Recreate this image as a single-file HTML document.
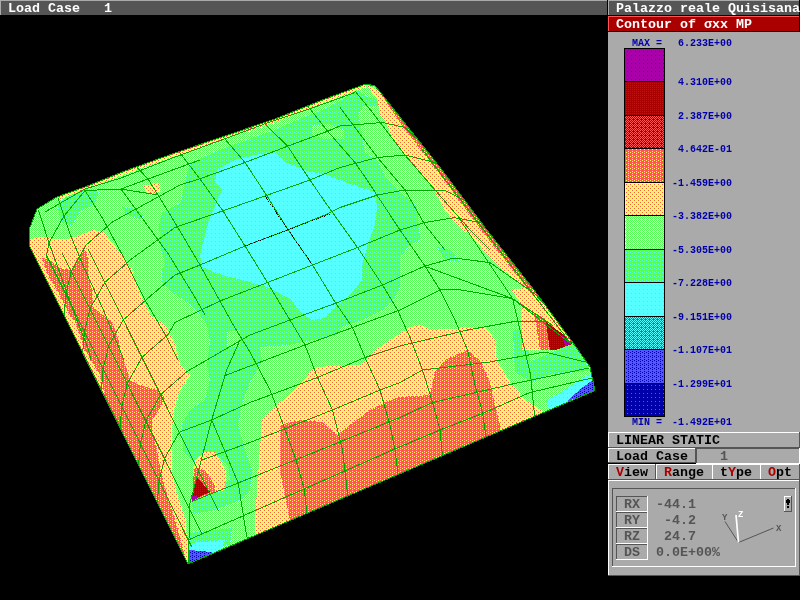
<!DOCTYPE html>
<html><head><meta charset="utf-8">
<style>
html,body{margin:0;padding:0;background:#000;width:800px;height:600px;overflow:hidden;position:relative;}
.t8{position:absolute;will-change:transform;font-family:"Liberation Mono",monospace;font-size:13.33px;font-weight:bold;line-height:14px;white-space:pre;color:#000;}
.t6{position:absolute;will-change:transform;font-family:"Liberation Mono",monospace;font-size:10px;font-weight:bold;line-height:10px;white-space:pre;color:#0000aa;}
.r{color:#aa0000;}
svg{position:absolute;left:0;top:0;}
</style></head><body>
<svg width="800" height="600" viewBox="0 0 800 600" shape-rendering="crispEdges">
<defs><pattern id="pM" width="4" height="4" patternUnits="userSpaceOnUse"><rect width="4" height="4" fill="#aa00aa"/><rect x="3" y="3" width="1" height="1" fill="#aa0000"/></pattern><pattern id="pDR" width="4" height="4" patternUnits="userSpaceOnUse"><rect width="4" height="4" fill="#aa0000"/><rect x="0" y="1" width="1" height="1" fill="#aa00aa"/><rect x="2" y="1" width="1" height="1" fill="#aa00aa"/><rect x="0" y="3" width="1" height="1" fill="#aa00aa"/><rect x="2" y="3" width="1" height="1" fill="#aa00aa"/></pattern><pattern id="pRC" width="4" height="4" patternUnits="userSpaceOnUse"><rect width="4" height="4" fill="#aa0000"/><rect x="0" y="0" width="1" height="1" fill="#ff5555"/><rect x="2" y="0" width="1" height="1" fill="#ff5555"/><rect x="1" y="1" width="1" height="1" fill="#ff5555"/><rect x="3" y="1" width="1" height="1" fill="#ff5555"/><rect x="0" y="2" width="1" height="1" fill="#ff5555"/><rect x="2" y="2" width="1" height="1" fill="#ff5555"/><rect x="3" y="3" width="1" height="1" fill="#ff5555"/></pattern><pattern id="pLR" width="4" height="4" patternUnits="userSpaceOnUse"><rect width="4" height="4" fill="#ff5555"/><rect x="2" y="0" width="1" height="1" fill="#ffff55"/><rect x="0" y="1" width="1" height="1" fill="#ffff55"/><rect x="0" y="3" width="1" height="1" fill="#ffff55"/></pattern><pattern id="pY" width="4" height="4" patternUnits="userSpaceOnUse"><rect width="4" height="4" fill="#ffff55"/><rect x="2" y="0" width="1" height="1" fill="#ff5555"/><rect x="0" y="2" width="1" height="1" fill="#ff5555"/></pattern><pattern id="pYG" width="4" height="4" patternUnits="userSpaceOnUse"><rect width="4" height="4" fill="#ffff55"/><rect x="0" y="0" width="1" height="1" fill="#55ff55"/><rect x="2" y="0" width="1" height="1" fill="#55ff55"/><rect x="1" y="1" width="1" height="1" fill="#55ff55"/><rect x="3" y="1" width="1" height="1" fill="#55ff55"/><rect x="0" y="2" width="1" height="1" fill="#55ff55"/><rect x="2" y="2" width="1" height="1" fill="#55ff55"/><rect x="3" y="3" width="1" height="1" fill="#55ff55"/></pattern><pattern id="pG" width="4" height="4" patternUnits="userSpaceOnUse"><rect width="4" height="4" fill="#55ff55"/><rect x="2" y="0" width="1" height="1" fill="#55ffff"/><rect x="0" y="1" width="1" height="1" fill="#55ffff"/><rect x="0" y="3" width="1" height="1" fill="#55ffff"/></pattern><pattern id="pC" width="4" height="4" patternUnits="userSpaceOnUse"><rect width="4" height="4" fill="#55ffff"/><rect x="3" y="1" width="1" height="1" fill="#55ff55"/></pattern><pattern id="pLB" width="4" height="4" patternUnits="userSpaceOnUse"><rect width="4" height="4" fill="#5555ff"/><rect x="0" y="0" width="1" height="1" fill="#55ffff"/><rect x="2" y="0" width="1" height="1" fill="#55ffff"/><rect x="1" y="1" width="1" height="1" fill="#55ffff"/><rect x="3" y="1" width="1" height="1" fill="#55ffff"/><rect x="0" y="2" width="1" height="1" fill="#55ffff"/><rect x="2" y="2" width="1" height="1" fill="#55ffff"/><rect x="3" y="3" width="1" height="1" fill="#55ffff"/></pattern><pattern id="pB" width="4" height="4" patternUnits="userSpaceOnUse"><rect width="4" height="4" fill="#5555ff"/><rect x="2" y="0" width="1" height="1" fill="#0000aa"/><rect x="0" y="1" width="1" height="1" fill="#0000aa"/><rect x="0" y="3" width="1" height="1" fill="#0000aa"/></pattern><pattern id="pDB" width="4" height="4" patternUnits="userSpaceOnUse"><rect width="4" height="4" fill="#0000aa"/><rect x="3" y="1" width="1" height="1" fill="#5555ff"/></pattern><clipPath id="sil"><polygon points="29,230 30,247 188,564 594,391 594,386 590,367 573,343 534,290 486,229 442,170 380,92 375,86 366,84 325,99 275,119 225,136 175,153 125,171 85,187 57,197 37,209"/></clipPath></defs>
<g clip-path="url(#sil)">
<polygon points="29,230 30,247 188,564 594,391 594,386 590,367 573,343 534,290 486,229 442,170 380,92 375,86 366,84 325,99 275,119 225,136 175,153 125,171 85,187 57,197 37,209" fill="url(#pYG)"/>
<polygon points="159,226 162,213 181,203 185,182 190,163 225,148 275,130 300,119 325,109 342,100 356,90 368,97 377,99 382,106 363,106 358,115 361,127 363,143 365,153 377,160 386,178 400,192 417,206 420,240 410,245 400,257 400,287 395,297 382,310 362,320 342,327 337,335 288,345 260,347 262,362 250,382 242,403 238,425 245,450 252,470 250,490 240,500 215,510 193,514 192,497 212,490 230,480 228,465 215,455 205,452 195,462 183,452 182,425 190,410 205,400 210,380 207,365 210,342 207,325 200,315 187,302 172,292 162,282 162,270 165,264 161,249" fill="url(#pG)"/>
<polygon points="57,204 70,195 84,189 99,192 95,204 80,211 72,226 61,222" fill="url(#pG)"/>
<polygon points="122,207 135,209 144,215 140,219 127,215" fill="url(#pG)"/>
<polygon points="513,331 527,328 530,362 558,350 573,343 588,366 590,371 551,374 532,382 515,372" fill="url(#pG)"/>
<polygon points="190,533 232,528 230,545 190,550" fill="url(#pG)"/>
<polygon points="437,247 450,250 460,262 445,260" fill="url(#pG)"/>
<polygon points="227,332 240,330 240,347 227,347" fill="url(#pYG)"/>
<polygon points="312,125 330,124 344,130 344,139 325,139 312,135" fill="url(#pYG)"/>
<polygon points="217,170 235,160 255,155 275,152 285,162 310,172 325,174 347,183 375,192 377,206 375,225 370,238 362,265 362,280 350,295 335,307 325,318 312,320 300,312 292,300 267,287 242,280 222,275 202,267 200,255 205,235 210,217 222,190 215,182" fill="url(#pC)"/>
<polygon points="546,401 565,390 583,378 593,373 594,391 550,410" fill="url(#pC)"/>
<polygon points="189,543 225,540 220,555 190,564" fill="url(#pC)"/>
<polygon points="569,399 583,387 593,380 594,391 566,402" fill="url(#pB)"/>
<polygon points="189,550 212,552 205,560 188,564" fill="url(#pB)"/>
<polygon points="30,239 41,237 54,239 67,239 79,236 92,230 103,232 112,243 124,258 132,270 137,287 145,305 150,315 165,325 175,345 180,365 190,375 180,390 178,395 173,413 172,435 172,470 177,495 185,520 188,545 188,564 30,247" fill="url(#pY)"/>
<polygon points="143,185 159,184 160,192 148,194" fill="url(#pY)"/>
<polygon points="60,196 125,170 175,152 225,135 275,118 325,98 366,83 366,87 325,102 275,122 225,139 175,156 125,174 60,199" fill="url(#pY)"/>
<polygon points="366,84 380,92 442,170 486,229 534,290 573,343 548,348 540,350 522,350 522,306 512,290 525,288 512,277 492,260 475,240 455,222 445,210 431,185 421,174 407,157 393,139 386,122 381,117 377,99" fill="url(#pY)"/>
<polygon points="262,420 275,407 295,390 315,367 360,365 380,347 395,337 410,327 420,325 430,330 485,327 495,340 497,362 510,382 525,400 545,413 255,536 255,520" fill="url(#pY)"/>
<polygon points="195,460 205,452 215,452 225,470 225,490 200,497 192,497" fill="url(#pY)"/>
<polygon points="42,258 50,260 60,268 72,270 78,257 85,249 88,258 88,273 92,290 93,307 103,315 112,322 117,335 122,355 130,380 140,385 157,390 165,397 160,408 152,420 152,433 157,450 160,467 163,480 167,495 172,510 178,530 186,560 188,564 106,400 100,375 85,350 80,335 75,322 68,312 63,302 57,290 48,275" fill="url(#pLR)"/>
<polygon points="280,470 280,425 300,420 322,422 337,435 350,425 370,410 390,400 400,397 430,395 435,372 445,360 467,350 480,360 490,382 495,405 500,425 501,432 290,521 285,495" fill="url(#pLR)"/>
<polygon points="534,312 546,320 572,344 556,350 540,350" fill="url(#pLR)"/>
<polygon points="380,92 442,170 486,229 534,290 530,292 482,231 438,172 400,123" fill="url(#pLR)"/>
<polygon points="194,468 205,470 215,485 215,493 192,500" fill="url(#pLR)"/>
<polygon points="197,477 210,492 192,500" fill="url(#pDR)"/>
<polygon points="546,322 560,332 572,344 556,350 550,350" fill="url(#pDR)"/>
<polygon points="191,495 199,497 192,502" fill="url(#pM)"/>
<polygon points="562,336 573,343 565,346" fill="url(#pM)"/>
<polyline points="133,163 148,179 158,195 177,226 200,265 220,301 235,328 250,352 270,390 280,416 296,460 304,488 307,513" fill="none" stroke="#00aa00" stroke-width="1"/>
<polyline points="175,148 180,153 200,179 223,211 245,246 267.5,282.5 290,320 305,345 317.5,377.5 332.5,410 342.5,450 348,497" fill="none" stroke="#00aa00" stroke-width="1"/>
<polyline points="220,134 225,139 245,162.5 267,196 287.5,229 312.5,265 335,302 352.5,327.5 365,357.5 380,390 390,425 395,450 398,474" fill="none" stroke="#00aa00" stroke-width="1"/>
<polyline points="262,119 265,124 287.5,146 310,180 325,202 357.5,247.5 382.5,285 397.5,310 410,337.5 422.5,370 432.5,402.5 440,430 442.5,456" fill="none" stroke="#00aa00" stroke-width="1"/>
<polyline points="305,103 310,109 327.5,131 355,162.5 367,180 400,230 425,266 440,290 455,320 467.5,350 475,385 482.5,412.5 486,437" fill="none" stroke="#00aa00" stroke-width="1"/>
<polyline points="355,91 372.5,112.5 405,155 435,190 470,230 490,250" fill="none" stroke="#00aa00" stroke-width="1"/>
<polyline points="340,107.5 377.5,157.5 405,190 425,225 445,250" fill="none" stroke="#00aa00" stroke-width="1"/>
<polyline points="427,267 512.6,298.6 571,343.7" fill="none" stroke="#00aa00" stroke-width="1"/>
<polyline points="458.6,217.6 512.6,298.6 530.6,375 535,420" fill="none" stroke="#00aa00" stroke-width="1"/>
<polyline points="422.5,150 571,343.7" fill="none" stroke="#00aa00" stroke-width="1"/>
<polyline points="45,212 85,189 121,178 175,157 225,138.75 265,123.75 310,108.75 355,92.5" fill="none" stroke="#00aa00" stroke-width="1"/>
<polyline points="112.4,221.9 180,185 200,178.75 245,162.5 287.5,146.25 327.5,131.25 340,126 382.5,122.5 405,127.5 428,150" fill="none" stroke="#00aa00" stroke-width="1"/>
<polyline points="131,259.3 175,227.5 222.5,211 265,196 310,180 340,167.5 377.5,157.5 405,155 435,162.5 455,178" fill="none" stroke="#00aa00" stroke-width="1"/>
<polyline points="149.7,296.7 175,275 200,265 245,246 287.5,230 325,215 340,207.5 377.5,195 405,190 445,190.5 481,208.5 508,235.6" fill="none" stroke="#00aa00" stroke-width="1"/>
<polyline points="168.4,334.1 175,322.5 220,301 267.5,282.5 312.5,265 357.5,247.5 400,230 425,222.5 454,217.6 490,224.3 521.6,253.6" fill="none" stroke="#00aa00" stroke-width="1"/>
<polyline points="187,371.5 250,335 290,320 337.5,302.5 382.5,285 425,266 454,258 490,262.6 535,294 545,305" fill="none" stroke="#00aa00" stroke-width="1"/>
<polyline points="224,376 250,366 305,345 352.5,327.5 400,310 440,290 458.6,289.6 512.6,298.6 553,325.7" fill="none" stroke="#00aa00" stroke-width="1"/>
<polyline points="211.7,420 250,402.5 317.5,377.5 365,357.5 400,346 467.6,330 517,321 546,322" fill="none" stroke="#00aa00" stroke-width="1"/>
<polyline points="201.7,460 250,442.5 332.5,410 380,390 400,382.5 422.5,370 490,362 545,352 585,362" fill="none" stroke="#00aa00" stroke-width="1"/>
<polyline points="191.7,501.7 320,450 387.5,422.5 400,417.5 432.5,402.5 512.6,384 589,368" fill="none" stroke="#00aa00" stroke-width="1"/>
<polyline points="188.3,540 392.5,450 440,430 485,412.5 530,392.5 592,378" fill="none" stroke="#00aa00" stroke-width="1"/>
<polyline points="188.3,563.3 190,503.3 211.7,420 226.7,370 240,340" fill="none" stroke="#00aa00" stroke-width="1"/>
<polyline points="211.7,420 238.3,483.3 246.7,536.7 249,538" fill="none" stroke="#00aa00" stroke-width="1"/>
<polyline points="46.7,255.8 191.8,547.0" fill="none" stroke="#00aa00" stroke-width="1"/>
<polyline points="62.1,253.1 201.9,533.6" fill="none" stroke="#00aa00" stroke-width="1"/>
<polyline points="87.8,248.7 218.7,511.3" fill="none" stroke="#00aa00" stroke-width="1"/>
<polyline points="112.5,221.9 86.0,245.1 71.2,271.5 65.9,294.3 64.0,315.3" fill="none" stroke="#00aa00" stroke-width="1"/>
<polyline points="131.1,259.3 104.7,282.5 89.9,308.9 84.5,331.7 82.7,352.7" fill="none" stroke="#00aa00" stroke-width="1"/>
<polyline points="149.7,296.7 123.3,319.9 108.5,346.3 103.1,369.1 101.3,390.1" fill="none" stroke="#00aa00" stroke-width="1"/>
<polyline points="168.4,334.1 142.0,357.3 127.2,383.7 121.8,406.5 120.0,427.5" fill="none" stroke="#00aa00" stroke-width="1"/>
<polyline points="187.0,371.5 160.6,394.7 145.8,421.1 140.4,443.9 138.6,464.9" fill="none" stroke="#00aa00" stroke-width="1"/>
<polyline points="179.3,432.2 164.5,458.5 159.1,481.3 157.3,502.3" fill="none" stroke="#00aa00" stroke-width="1"/>
<polyline points="179.2,432.2 211.7,420" fill="none" stroke="#00aa00" stroke-width="1"/>
<polyline points="85,190.5 103,219 124,258 145,300 166,336 178,360" fill="none" stroke="#00aa00" stroke-width="1"/>
<polyline points="38.5,210 49,243 61,276 76,318 88,348 91,360" fill="none" stroke="#00aa00" stroke-width="1"/>
<polyline points="58,198 70,234 85,270 103,309 124,360" fill="none" stroke="#00aa00" stroke-width="1"/>
<polyline points="121,189 145,222 169,255 193,294 205,315" fill="none" stroke="#00aa00" stroke-width="1"/>
<polyline points="85,190.5 64,216 49,243 46,258" fill="none" stroke="#00aa00" stroke-width="1"/>
<polyline points="85,190.5 121,189 158,195" fill="none" stroke="#00aa00" stroke-width="1"/>
<polyline points="121,189 148,179 200,160" fill="none" stroke="#00aa00" stroke-width="1"/>
<polyline points="265,196 287.5,229 312.5,265" fill="none" stroke="#000" stroke-width="1" stroke-dasharray="1 1"/>
<polyline points="245,246 287.5,230 330,214" fill="none" stroke="#000" stroke-width="1" stroke-dasharray="1 1"/>
</g>
<polygon points="29,230 30,247 188,564 594,391 594,386 590,367 573,343 534,290 486,229 442,170 380,92 375,86 366,84 325,99 275,119 225,136 175,153 125,171 85,187 57,197 37,209" fill="none" stroke="#00aa00" stroke-width="1"/>
<!-- top bars -->
<rect x="0" y="0" width="607" height="15" fill="#aaaaaa"/>
<rect x="1" y="1" width="606" height="14" fill="#555555"/>
<rect x="607" y="0" width="1" height="15" fill="#000"/>
<rect x="608" y="0" width="191" height="15" fill="#aaaaaa"/>
<rect x="609" y="1" width="190" height="14" fill="#555555"/>
<rect x="608" y="16" width="191" height="15" fill="#ff5555"/>
<rect x="609" y="17" width="190" height="14" fill="#aa0000"/>
<!-- panel -->
<rect x="608" y="32" width="192" height="400" fill="#aaaaaa"/>
<rect x="624" y="48" width="41" height="369" fill="#000"/>
<rect x="625" y="49" width="39" height="32" fill="url(#pM)"/>
<rect x="625" y="82" width="39" height="33" fill="url(#pDR)"/>
<rect x="625" y="116" width="39" height="32" fill="url(#pRC)"/>
<rect x="625" y="149" width="39" height="33" fill="url(#pLR)"/>
<rect x="625" y="183" width="39" height="32" fill="url(#pY)"/>
<rect x="625" y="216" width="39" height="33" fill="url(#pYG)"/>
<rect x="625" y="250" width="39" height="32" fill="url(#pG)"/>
<rect x="625" y="283" width="39" height="33" fill="url(#pC)"/>
<rect x="625" y="317" width="39" height="32" fill="url(#pLB)"/>
<rect x="625" y="350" width="39" height="33" fill="url(#pB)"/>
<rect x="625" y="384" width="39" height="32" fill="url(#pDB)"/>
<!-- LINEAR STATIC box -->
<rect x="608" y="432" width="192" height="16" fill="#555555"/>
<rect x="608" y="432" width="191" height="15" fill="#ffffff"/>
<rect x="609" y="433" width="190" height="14" fill="#aaaaaa"/>
<!-- Load case btn -->
<rect x="608" y="448" width="88" height="15" fill="#555555"/>
<rect x="608" y="448" width="87" height="14" fill="#ffffff"/>
<rect x="609" y="449" width="86" height="13" fill="#aaaaaa"/>
<!-- field -->
<rect x="696" y="448" width="104" height="16" fill="#ffffff"/>
<rect x="696" y="448" width="103" height="15" fill="#555555"/>
<rect x="697" y="449" width="102" height="14" fill="#aaaaaa"/>
<!-- menu row -->
<rect x="608" y="464" width="192" height="16" fill="#555555"/>
<rect x="608" y="464" width="47" height="15" fill="#ffffff"/><rect x="609" y="465" width="46" height="14" fill="#aaaaaa"/>
<rect x="656" y="464" width="56" height="15" fill="#ffffff"/><rect x="657" y="465" width="55" height="14" fill="#aaaaaa"/>
<rect x="712" y="464" width="48" height="15" fill="#ffffff"/><rect x="713" y="465" width="47" height="14" fill="#aaaaaa"/>
<rect x="760" y="464" width="39" height="15" fill="#ffffff"/><rect x="761" y="465" width="38" height="14" fill="#aaaaaa"/>
<!-- bottom panel -->
<rect x="608" y="480" width="192" height="96" fill="#555555"/>
<rect x="608" y="480" width="191" height="95" fill="#ffffff"/>
<rect x="609" y="481" width="190" height="94" fill="#aaaaaa"/>
<!-- group box -->
<rect x="612" y="488" width="184" height="79" fill="#ffffff"/>
<rect x="612" y="488" width="183" height="78" fill="#555555"/>
<rect x="613" y="489" width="182" height="77" fill="#aaaaaa"/>
<!-- label boxes -->
<g>
<rect x="616" y="496" width="32" height="16" fill="#ffffff"/><rect x="616" y="496" width="31" height="15" fill="#555555"/><rect x="617" y="497" width="30" height="14" fill="#aaaaaa"/>
<rect x="616" y="512" width="32" height="16" fill="#ffffff"/><rect x="616" y="512" width="31" height="15" fill="#555555"/><rect x="617" y="513" width="30" height="14" fill="#aaaaaa"/>
<rect x="616" y="528" width="32" height="16" fill="#ffffff"/><rect x="616" y="528" width="31" height="15" fill="#555555"/><rect x="617" y="529" width="30" height="14" fill="#aaaaaa"/>
<rect x="616" y="544" width="32" height="16" fill="#ffffff"/><rect x="616" y="544" width="31" height="15" fill="#555555"/><rect x="617" y="545" width="30" height="14" fill="#aaaaaa"/>
</g>
<!-- small button -->
<rect x="784" y="496" width="8" height="16" fill="#555555"/>
<rect x="784" y="496" width="7" height="15" fill="#ffffff"/>
<rect x="785" y="497" width="6" height="14" fill="#aaaaaa"/>
<rect x="787" y="499" width="2" height="1" fill="#000"/><rect x="786" y="500" width="4" height="3" fill="#000"/>
<rect x="787" y="503" width="2" height="2" fill="#000"/>
<rect x="787" y="506" width="2" height="2" fill="#000"/>
<!-- axes -->
<g shape-rendering="auto">
<line x1="738.5" y1="542.5" x2="773.5" y2="528" stroke="#555555" stroke-width="1"/>
<line x1="738.5" y1="542.5" x2="725" y2="521.5" stroke="#555555" stroke-width="1"/>
<line x1="738.5" y1="542.5" x2="736" y2="515" stroke="#ffffff" stroke-width="1.7"/>
</g>
</svg>
<div class="t8" style="left:8px;top:2px;color:#fff">Load Case   1</div>
<div class="t8" style="left:616px;top:2px;color:#fff">Palazzo reale Quisisana</div>
<div class="t8" style="left:616px;top:18px;color:#fff">Contour of σxx MP</div>
<div class="t6" style="left:677.8px;top:39px">6.233E+00</div>
<div class="t6" style="left:677.8px;top:78px">4.310E+00</div>
<div class="t6" style="left:677.8px;top:112px">2.387E+00</div>
<div class="t6" style="left:677.8px;top:145px">4.642E-01</div>
<div class="t6" style="left:671.8px;top:179px">-1.459E+00</div>
<div class="t6" style="left:671.8px;top:212px">-3.382E+00</div>
<div class="t6" style="left:671.8px;top:246px">-5.305E+00</div>
<div class="t6" style="left:671.8px;top:279px">-7.228E+00</div>
<div class="t6" style="left:671.8px;top:313px">-9.151E+00</div>
<div class="t6" style="left:671.8px;top:346px">-1.107E+01</div>
<div class="t6" style="left:671.8px;top:380px">-1.299E+01</div>
<div class="t6" style="left:671.8px;top:418px">-1.492E+01</div>
<div class="t6" style="left:631.8px;top:39px">MAX =</div>
<div class="t6" style="left:631.8px;top:418px">MIN =</div>
<div class="t8" style="left:616px;top:434px;">LINEAR STATIC</div>
<div class="t8" style="left:616px;top:450px;">Load Case</div>
<div class="t8" style="left:720px;top:450px;color:#555555">1</div>
<div class="t8" style="left:616px;top:466px;"><span class="r">V</span>iew</div>
<div class="t8" style="left:664px;top:466px;"><span class="r">R</span>ange</div>
<div class="t8" style="left:720px;top:466px;">t<span class="r">Y</span>pe</div>
<div class="t8" style="left:768px;top:466px;"><span class="r">O</span>pt</div>
<div class="t8" style="left:624px;top:498px;color:#555555">RX</div>
<div class="t8" style="left:624px;top:514px;color:#555555">RY</div>
<div class="t8" style="left:624px;top:530px;color:#555555">RZ</div>
<div class="t8" style="left:624px;top:546px;color:#555555">DS</div>
<div class="t8" style="left:656px;top:498px;color:#555555">-44.1</div>
<div class="t8" style="left:656px;top:514px;color:#555555"> -4.2</div>
<div class="t8" style="left:656px;top:530px;color:#555555"> 24.7</div>
<div class="t8" style="left:656px;top:546px;color:#555555">0.0E+00%</div>
<div class="t6" style="left:722px;top:513px;color:#555555;font-size:9px">Y</div>
<div class="t6" style="left:738px;top:510px;color:#ffffff;font-size:9px">Z</div>
<div class="t6" style="left:776px;top:524px;color:#555555;font-size:9px">X</div>
</body></html>
